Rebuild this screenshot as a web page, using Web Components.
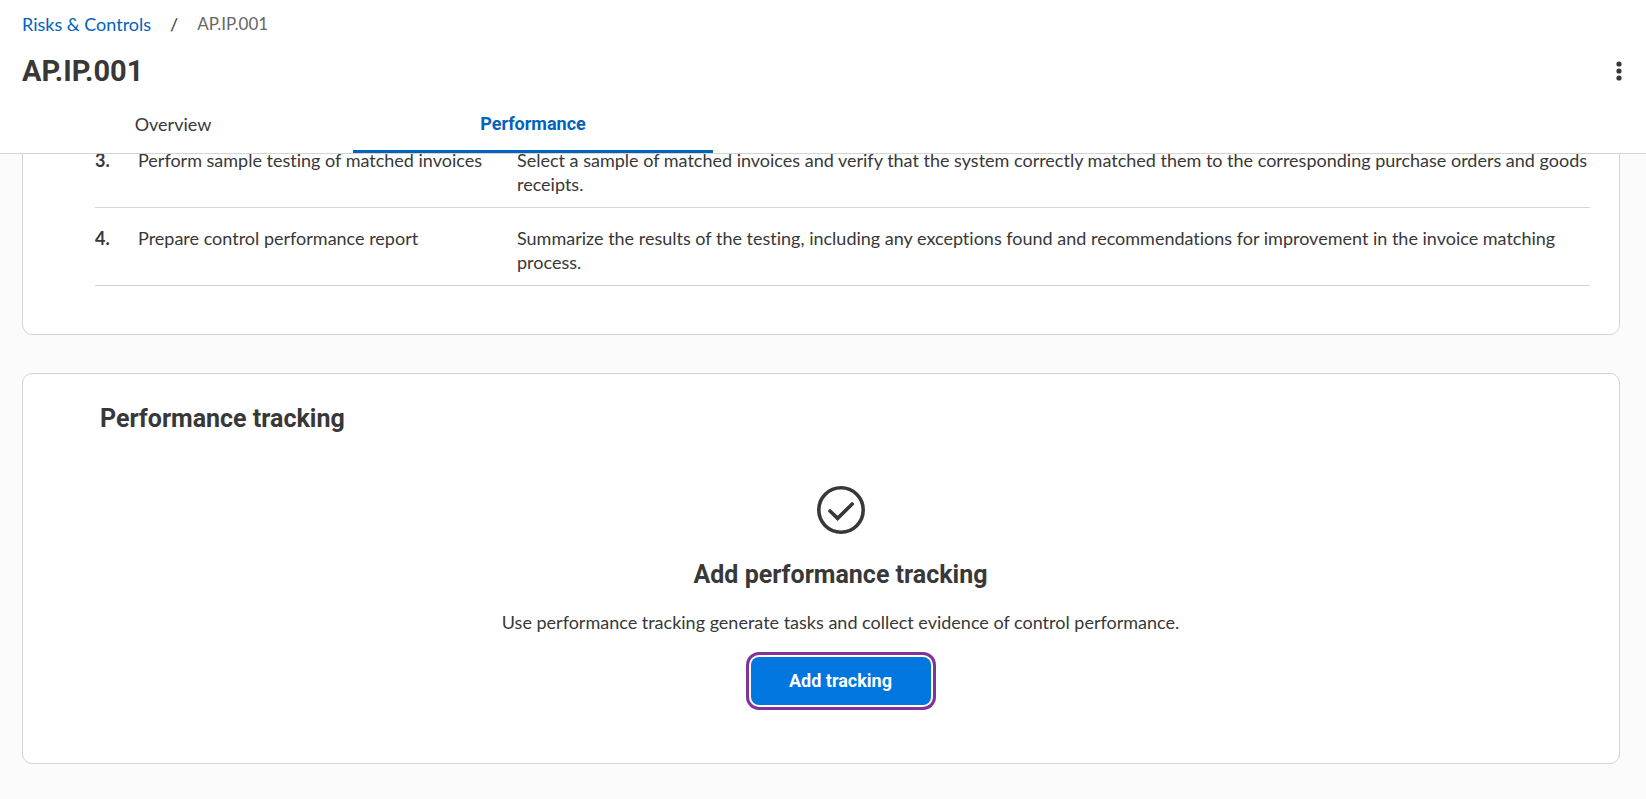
<!DOCTYPE html>
<html lang="en">
<head>
<meta charset="utf-8">
<title>AP.IP.001</title>
<style>
  body {
    --bold-font: Roboto, "Liberation Sans", sans-serif;
    margin: 0;
    min-height: 100vh;
    background: #fbfbfb;
    color: #383838;
    font: 18px/24px Lato, "Liberation Sans", sans-serif;
    font-variant-ligatures: none;
  }
</style>
</head>
<body>
<control-page></control-page>

<script>
const makeTemplate = (html) => {
  const template = document.createElement('template');
  template.innerHTML = html;
  return template;
};

class BaseElement extends HTMLElement {
  constructor() {
    super();
    this.attachShadow({ mode: 'open' });
    this.shadowRoot.appendChild(this.constructor.template.content.cloneNode(true));
  }
}

class BreadCrumbs extends BaseElement {
  static template = makeTemplate(`
    <style>
      :host {
        display: block;
      }
      nav {
        display: flex;
        gap: 19px;
      }
      a {
        color: #0063be;
        text-decoration: none;
      }
      .current {
        color: #666;
        font-size: 17px;
      }
    </style>
    <nav aria-label="Breadcrumb">
      <a href="#risks">Risks &amp; Controls</a>
      <span>/</span>
      <span class="current" aria-current="page">AP.IP.001</span>
    </nav>
  `);
}

class TabBar extends BaseElement {
  static template = makeTemplate(`
    <style>
      :host {
        display: block;
      }
      div {
        display: flex;
        margin-left: -7px;
      }
      button {
        width: 360px;
        padding: 12px 0 14px;
        border: 0;
        border-bottom: 3px solid transparent;
        background: none;
        color: inherit;
        font: inherit;
      }
      button[aria-selected="true"] {
        border-color: #0063be;
        color: #0063be;
        font-family: var(--bold-font);
        font-weight: 700;
      }
    </style>
    <div role="tablist">
      <button type="button" role="tab" aria-selected="false">Overview</button>
      <button type="button" role="tab" aria-selected="true">Performance</button>
    </div>
  `);
}

class PageHeader extends BaseElement {
  static template = makeTemplate(`
    <style>
      :host {
        display: block;
        position: sticky;
        top: 0;
        z-index: 1;
        border-bottom: 1px solid #d4d4d4;
        background: #fff;
      }
      bread-crumbs {
        padding: 12px 22px 0;
      }
      .title {
        display: flex;
        align-items: center;
        justify-content: space-between;
        padding: 17px 16px 11px 22px;
      }
      h1 {
        margin: 0;
        font-family: var(--bold-font);
        font-size: 29px;
        line-height: 36px;
      }
      button {
        display: flex;
        padding: 0;
        border: 0;
        background: none;
        color: inherit;
      }
    </style>
    <bread-crumbs></bread-crumbs>
    <div class="title">
      <h1><slot></slot></h1>
      <button type="button" aria-label="More actions">
        <svg width="22" height="22" viewBox="0 0 22 22" fill="currentColor">
          <circle cx="11" cy="4" r="2.6"/>
          <circle cx="11" cy="11" r="2.6"/>
          <circle cx="11" cy="18" r="2.6"/>
        </svg>
      </button>
    </div>
    <tab-bar></tab-bar>
  `);
}

class ContentCard extends BaseElement {
  static template = makeTemplate(`
    <style>
      :host {
        display: block;
        border: 1px solid #d4d4d4;
        border-radius: 10px;
        background: #fff;
      }
    </style>
    <slot></slot>
  `);
}

class StepTable extends BaseElement {
  static template = makeTemplate(`
    <style>
      :host {
        display: block;
        padding: 0 29px 48px 72px;
      }
      table {
        width: 100%;
        border-collapse: collapse;
      }
      th, td {
        padding: 18px 0 11px;
        border-bottom: 1px solid #d4d4d4;
        text-align: left;
        vertical-align: top;
      }
      .num {
        width: 43px;
      }
      .name {
        width: 379px;
      }
    </style>
    <table>
      <tbody>
        <tr>
          <th class="num" scope="row">3.</th>
          <td class="name">Perform sample testing of matched invoices</td>
          <td>Select a sample of matched invoices and verify that the system correctly matched them to the corresponding purchase orders and goods receipts.</td>
        </tr>
        <tr>
          <th class="num" scope="row">4.</th>
          <td class="name">Prepare control performance report</td>
          <td>Summarize the results of the testing, including any exceptions found and recommendations for improvement in the invoice matching process.</td>
        </tr>
      </tbody>
    </table>
  `);
}

class TrackingPanel extends BaseElement {
  static template = makeTemplate(`
    <style>
      :host {
        display: block;
        padding: 29px 38px 58px 77px;
      }
      h2, p {
        margin: 0;
      }
      h2 {
        font-family: var(--bold-font);
        font-size: 25px;
        line-height: 32px;
      }
      .empty {
        display: flex;
        flex-direction: column;
        align-items: center;
        padding-top: 51px;
      }
      .empty h2 {
        margin: 25px 0 19px;
      }
      .empty p {
        margin-bottom: 23px;
        text-align: center;
      }
      svg {
        display: block;
      }
      button {
        min-width: 180px;
        height: 48px;
        padding: 0 24px;
        border: 0;
        border-radius: 8px;
        background: #0076de;
        color: #fff;
        font: inherit;
        font-family: var(--bold-font);
        font-weight: 700;
        box-shadow: 0 0 0 2px #fff, 0 0 0 5px #82329b;
      }
    </style>
    <h2>Performance tracking</h2>
    <div class="empty">
      <svg width="48" height="48" viewBox="0 0 48 48" fill="none" stroke="#383838" stroke-width="3.6" stroke-linecap="round">
        <circle cx="24" cy="24" r="22.2"/>
        <path d="M13 25 20.6 32.4 35.2 18"/>
      </svg>
      <h2>Add performance tracking</h2>
      <p>Use performance tracking generate tasks and collect evidence of control performance.</p>
      <button type="button">Add tracking</button>
    </div>
  `);
}

class ControlPage extends BaseElement {
  static template = makeTemplate(`
    <style>
      :host {
        display: block;
      }
      /* the first card runs up behind the sticky header */
      main {
        display: flex;
        flex-direction: column;
        gap: 38px;
        margin-top: -25px;
        padding: 0 26px 35px 22px;
      }
    </style>
    <page-header>AP.IP.001</page-header>
    <main>
      <content-card><step-table></step-table></content-card>
      <content-card><tracking-panel></tracking-panel></content-card>
    </main>
  `);
}

customElements.define('bread-crumbs', BreadCrumbs);
customElements.define('tab-bar', TabBar);
customElements.define('page-header', PageHeader);
customElements.define('content-card', ContentCard);
customElements.define('step-table', StepTable);
customElements.define('tracking-panel', TrackingPanel);
customElements.define('control-page', ControlPage);
</script>
</body>
</html>
